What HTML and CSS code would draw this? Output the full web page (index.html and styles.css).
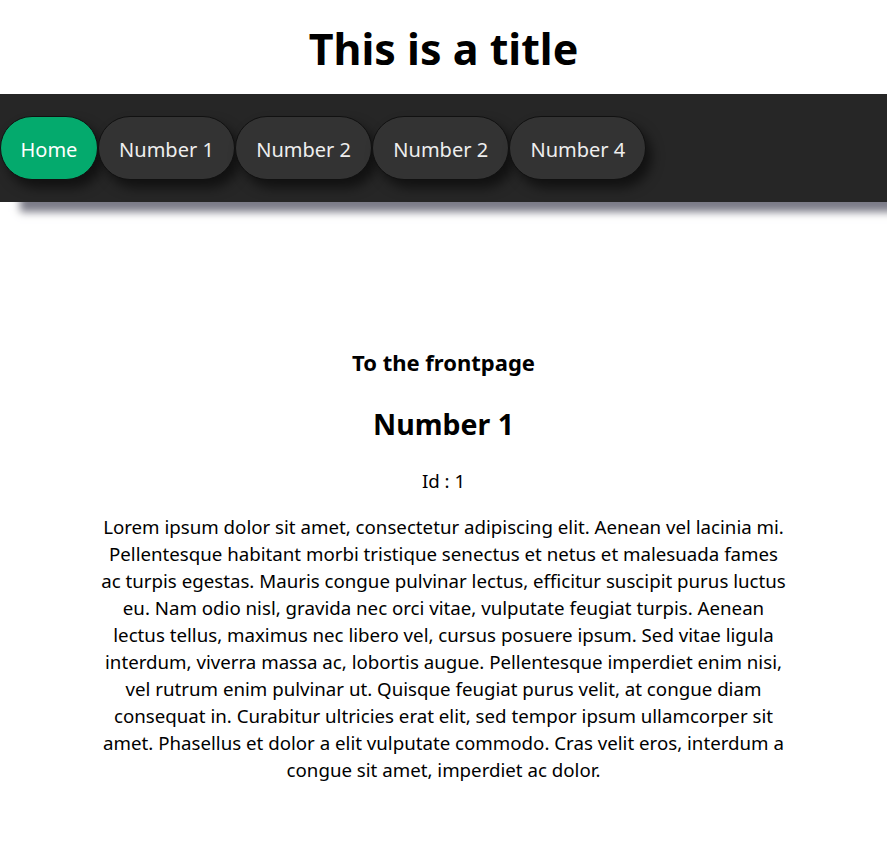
FILE: index.html
```html
<!DOCTYPE html>
<html lang="en">
<head>
<meta charset="utf-8">
<title>This is a title</title>
<link rel="stylesheet" href="styles.css">
</head>
<body>
<header class="site-header">
  <h1 class="site-title">This is a title</h1>
</header>
<nav class="navbar">
  <a class="nav-btn active" href="#">Home</a>
  <a class="nav-btn" href="#">Number 1</a>
  <a class="nav-btn" href="#">Number 2</a>
  <a class="nav-btn" href="#">Number 2</a>
  <a class="nav-btn" href="#">Number 4</a>
</nav>
<main class="content">
  <h3 class="back-link">To the frontpage</h3>
  <h2 class="item-title">Number 1</h2>
  <p class="item-id">Id : 1</p>
  <p class="item-text">Lorem ipsum dolor sit amet, consectetur adipiscing elit. Aenean vel lacinia mi. Pellentesque habitant morbi tristique senectus et netus et malesuada fames ac turpis egestas. Mauris congue pulvinar lectus, efficitur suscipit purus luctus eu. Nam odio nisl, gravida nec orci vitae, vulputate feugiat turpis. Aenean lectus tellus, maximus nec libero vel, cursus posuere ipsum. Sed vitae ligula interdum, viverra massa ac, lobortis augue. Pellentesque imperdiet enim nisi, vel rutrum enim pulvinar ut. Quisque feugiat purus velit, at congue diam consequat in. Curabitur ultricies erat elit, sed tempor ipsum ullamcorper sit amet. Phasellus et dolor a elit vulputate commodo. Cras velit eros, interdum a congue sit amet, imperdiet ac dolor.</p>
</main>
</body>
</html>
```

FILE: styles.css
```css
html, body {
  margin: 0;
  padding: 0;
  background: #fff;
  color: #000;
  font-family: "Segoe UI", "Noto Sans", sans-serif;
}

.site-header {
  display: flex;
  justify-content: center;
  height: 94px;
  align-items: center;
}

.site-title {
  margin: 0;
  padding-top: 3px;
  font-size: 43px;
  font-weight: 700;
  line-height: 1;
}

.navbar {
  display: flex;
  align-items: center;
  height: 108px;
  background: #262626;
  box-shadow: 20px 10px 8px #7c7c88;
}

.nav-btn {
  display: block;
  box-sizing: border-box;
  height: 64px;
  padding: 3px 20.2px 0;
  line-height: 59px;
  border: 1px solid #111;
  border-radius: 32px;
  background: #333333;
  color: #eeeeee;
  font-size: 20px;
  text-decoration: none;
  box-shadow: 6px 8px 12px rgba(0, 0, 0, 0.55);
}

.nav-btn.active {
  background: #04aa6d;
  color: #fff;
  padding: 3px 19.5px 0;
}

.content {
  max-width: 690px;
  margin: 0 auto;
  padding-top: 145px;
  text-align: center;
}

.back-link {
  margin: 0;
  font-size: 22px;
  font-weight: 700;
  line-height: 30px;
}

.item-title {
  margin: 29px 0 0;
  font-size: 28.5px;
  font-weight: 700;
  line-height: 36px;
}

.item-id {
  margin: 25px 0 0;
  font-size: 18.7px;
  line-height: 27px;
}

.item-text {
  margin: 19px 0 0;
  font-size: 18.7px;
  line-height: 27px;
}
```
